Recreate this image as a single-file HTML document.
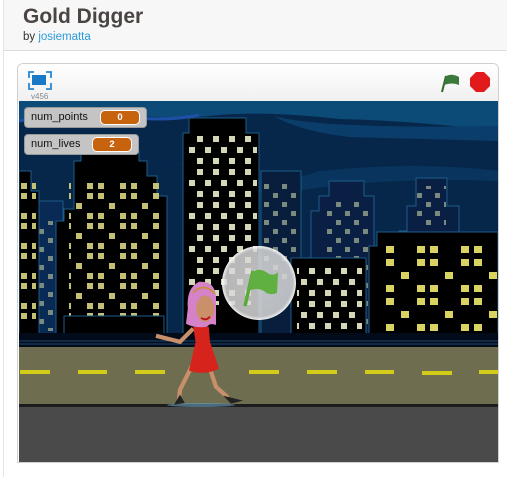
<!DOCTYPE html>
<html><head><style>
body{margin:0;width:507px;height:477px;overflow:hidden;background:#fff;font-family:"Liberation Sans",sans-serif;position:relative}
.hdr{position:absolute;left:3px;top:0;width:504px;height:50px;background:#f7f7f7;border-bottom:1px solid #ddd;border-left:1px solid #e4e4e4}
.hdr h1{position:absolute;left:19px;top:5px;margin:0;font-size:21px;font-weight:bold;color:#4a4443}
.hdr .by{position:absolute;left:19px;top:31px;font-size:11.5px;color:#333}
.hdr .by span{color:#2a9ad8}
.side{position:absolute;left:3px;top:51px;width:1px;height:426px;background:#e4e4e4}
.player{position:absolute;left:17px;top:63px;width:480px;height:398px;border:1px solid #d0d0d0;border-radius:6px 6px 0 0;background:#fff;overflow:hidden}
.tb{position:absolute;left:0;top:0;width:480px;height:37px;background:linear-gradient(#fff,#f0f0f0)}
.stage{position:absolute;left:1px;top:37px}
.mon{position:absolute;height:19px;background:#c4c4c4;border:1px solid #999;border-radius:4px;font-size:11px;color:#111}
.mon b{position:absolute;top:2px;height:13px;background:#c7620e;border:1px solid #fff;border-radius:5px;color:#fff;font-size:9.5px;text-align:center;line-height:13px}
</style></head><body>
<div class="hdr"><h1>Gold Digger</h1><div class="by">by <span>josiematta</span></div></div>
<div class="side"></div>
<div class="player">
 <div class="tb">
  <svg width="480" height="37" style="position:absolute;left:0;top:0">
   <rect x="14" y="11" width="14" height="10" fill="#1a79c7"/>
   <path d="M11 14V8h5M28 8h5v6M33 19v6h-5M16 25h-5v-6" fill="none" stroke="#2a86cf" stroke-width="1.8"/>
   <text x="13" y="35" font-size="8" fill="#888" font-family="Liberation Sans">v456</text>
   <path d="M424 28L428 12" stroke="#2e6a2e" stroke-width="2"/>
   <path d="M428 12Q434 9 441 13L441 21Q434 18 426 21Z" fill="#3c7a3c"/>
   <polygon points="458,8 466,8 472,14 472,22 466,28 458,28 452,22 452,14" fill="#e11b1b"/>
  </svg>
 </div>
 <div class="stage">
 <svg width="479" height="361" viewBox="0 0 479 361">
  <defs>
   <pattern id="wy" width="33" height="30" patternUnits="userSpaceOnUse"><g fill="#c4c074"><rect x="2" y="2" width="6" height="6"/><rect x="13" y="2" width="6" height="6"/><rect x="24" y="12" width="6" height="6"/><rect x="2" y="22" width="6" height="6"/><rect x="13" y="22" width="6" height="6"/></g></pattern>
   <pattern id="ww" width="32" height="33" patternUnits="userSpaceOnUse"><g fill="#d6d6b8"><rect x="2" y="2" width="6" height="6"/><rect x="18" y="2" width="6" height="6"/><rect x="10" y="13" width="6" height="6"/><rect x="26" y="13" width="6" height="6"/><rect x="2" y="24" width="6" height="6"/><rect x="18" y="24" width="6" height="6"/></g></pattern>
   <pattern id="wg" width="18" height="18" patternUnits="userSpaceOnUse"><g fill="#7b8a7e"><rect x="2" y="2" width="5" height="5"/><rect x="11" y="11" width="5" height="5"/></g></pattern>
   <pattern id="yy" width="44" height="39" patternUnits="userSpaceOnUse"><g fill="#d9d461"><rect x="2" y="2" width="8" height="7"/><rect x="15" y="2" width="8" height="7"/><rect x="30" y="15" width="8" height="7"/><rect x="2" y="28" width="8" height="7"/><rect x="15" y="28" width="8" height="7"/></g></pattern>
   <radialGradient id="bub"><stop offset="0" stop-color="#ddd" stop-opacity=".85"/><stop offset=".9" stop-color="#d8d8d8" stop-opacity=".85"/><stop offset="1" stop-color="#fff" stop-opacity=".95"/></radialGradient>
  </defs>
  <rect width="479" height="245" fill="#06274a"/>
  <path d="M0 0H479V30Q400 20 320 18Q250 10 200 14Q150 20 100 12Q60 8 0 20Z" fill="#0c4a78"/>
  <path d="M0 20Q60 8 100 14Q140 22 180 14" stroke="#1d4fa8" stroke-width="3" fill="none"/>
  <path d="M255 15Q300 28 479 25V40Q400 38 330 36Q280 30 255 15Z" fill="#0b3d6a"/>
  <path d="M150 60Q250 90 300 70Q400 60 479 70V80Q350 75 250 95Z" fill="#0a3a66" opacity=".7"/>
  <!-- back buildings -->
  <rect x="19" y="100" width="25" height="145" fill="#082a55" stroke="#1d5c8a"/>
  <rect x="20" y="120" width="22" height="110" fill="url(#wg)"/>
  <rect x="242" y="70" width="40" height="175" fill="#091d3c" stroke="#1d5c8a"/>
  <rect x="245" y="80" width="35" height="100" fill="url(#wg)"/>
  <path d="M292 245V110H300V95H310V80H345V95H355V245Z" fill="#0a1f44" stroke="#1d5c8a"/>
  <rect x="305" y="100" width="45" height="140" fill="url(#wg)"/>
  <path d="M380 245V130H388V105H397V77H428V105H440V245Z" fill="#0a1f44" stroke="#1d5c8a"/>
  <rect x="397" y="85" width="30" height="40" fill="url(#wg)"/>
  <!-- left black -->
  <path d="M0 245V70H12V90H20V245Z" fill="#000" stroke="#1d5c8a"/>
  <rect x="1" y="80" width="16" height="160" fill="url(#wy)"/>
  <!-- big stepped -->
  <path d="M37 245V120H45V108H55V60H62V50H120V60H128V75H138V95H148V245Z" fill="#000" stroke="#1d5c8a"/>
  <rect x="50" y="80" width="92" height="140" fill="url(#wy)"/>
  <rect x="45" y="215" width="100" height="30" fill="#000" stroke="#1d5c8a"/>
  <!-- tall -->
  <path d="M164 245V32H170V17H227V32H240V245Z" fill="#000" stroke="#1d5c8a"/>
  <rect x="168" y="34" width="70" height="170" fill="url(#ww)"/>
  <!-- front middle -->
  <rect x="272" y="157" width="75" height="88" fill="#000" stroke="#1d5c8a"/>
  <rect x="278" y="162" width="65" height="70" fill="url(#ww)"/>
  <!-- right yellow -->
  <path d="M350 245V145H358V131H479V245Z" fill="#000" stroke="#1d5c8a"/>
  <rect x="366" y="140" width="113" height="95" fill="url(#yy)"/>
  <rect x="0" y="232" width="479" height="14" fill="#020b1a"/>
  <path d="M0 240H479M0 243H479" stroke="#1d4a70" stroke-width="1"/>
  <!-- road -->
  <rect y="246" width="479" height="58" fill="#6e6d50"/>
  <g fill="#d2cc18"><rect x="1" y="269" width="30" height="4"/><rect x="59" y="269" width="29" height="4"/><rect x="116" y="269" width="30" height="4"/><rect x="230" y="269" width="30" height="4"/><rect x="288" y="269" width="30" height="4"/><rect x="346" y="269" width="29" height="4"/><rect x="403" y="270" width="30" height="4"/><rect x="460" y="269" width="19" height="4"/></g>
  <rect y="303" width="479" height="3" fill="#1c1c1c"/>
  <rect y="306" width="479" height="55" fill="#4a4a4a"/>
  <!-- girl -->
  <ellipse cx="182" cy="304" rx="34" ry="2" fill="#6aa0c0" opacity=".6"/>
  <g transform="translate(182,302) scale(.6) translate(-185,-302)">
  <path d="M110 190L150 200L172 178" stroke="#c8906a" stroke-width="7" fill="none"/>
  <path d="M175 230L150 280L148 300M195 230L210 275L230 293" stroke="#c8906a" stroke-width="7" fill="none"/>
  <path d="M150 288L140 305L158 302ZM222 290L235 303L255 298Z" fill="#222"/>
  <path d="M172 175L198 175L200 200L215 245Q190 257 165 248L176 200Z" fill="#d6231c"/>
  <path d="M163 145Q160 110 182 100Q208 98 210 125L210 172Q200 168 195 175Q175 178 160 170Z" fill="#d682c8"/>
  <ellipse cx="192" cy="145" rx="15" ry="22" fill="#c9906a"/>
  <path d="M172 118Q190 100 208 120" stroke="#c89038" stroke-width="3" fill="none"/>
  <path d="M185 160Q193 166 200 158" stroke="#c01020" stroke-width="3" fill="none"/>
  </g>
  <!-- bubble -->
  <circle cx="240" cy="182" r="37" fill="url(#bub)"/>
  <path d="M226 205L234 170" stroke="#5aaa3a" stroke-width="3.5"/>
  <path d="M233 172Q240 165 250 173Q256 175 259 171L258 192Q250 195 245 190Q238 186 229 190Z" fill="#5fb040"/>
 </svg>
 <div class="mon" style="left:5px;top:6px;width:121px"><span style="position:absolute;left:6px;top:3px">num_points</span><b style="left:75px;width:38px">0</b></div>
 <div class="mon" style="left:5px;top:33px;width:113px"><span style="position:absolute;left:6px;top:3px">num_lives</span><b style="left:67px;width:38px">2</b></div>
 </div>
</div>
</body></html>
